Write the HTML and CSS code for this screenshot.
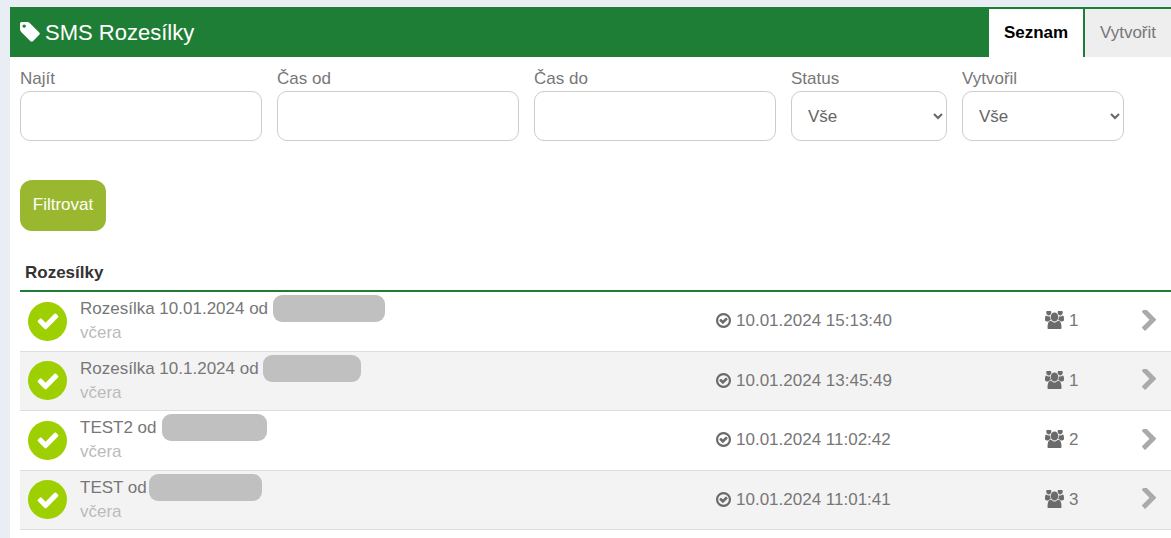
FILE: index.html
```html
<!DOCTYPE html>
<html lang="en">
<head>
    <meta charset="UTF-8">
    <meta name="viewport" content="width=device-width, initial-scale=1.0">
    <title>SMS Rozesílky</title>
    <link rel="stylesheet" href="styles.css">
</head>
<body>
    <!-- Icons -->
    <svg class="icon-defs" xmlns="http://www.w3.org/2000/svg">
        <symbol id="i-tag" viewBox="128 128 1536 1536"><path d="M576 448q0-53-37.5-90.5t-90.5-37.5-90.5 37.5-37.5 90.5 37.5 90.5 90.5 37.5 90.5-37.5 37.5-90.5zm1067 576q0 53-37 90l-491 492q-39 37-91 37-53 0-90-37l-715-716q-38-37-64.5-101t-26.5-117v-416q0-52 38-90t90-38h416q53 0 117 26.5t102 64.5l715 714q37 39 37 91z"/></symbol>
        <symbol id="i-check" viewBox="0 0 1792 1792"><path d="M1671 566q0 40-28 68l-724 724-136 136q-28 28-68 28t-68-28l-136-136-362-362q-28-28-28-68t28-68l136-136q28-28 68-28t68 28l294 295 656-657q28-28 68-28t68 28l136 136q28 28 28 68z"/></symbol>
        <symbol id="i-check-o" viewBox="128 128 1536 1536"><path d="M1299 813l-422 422q-19 19-45 19t-45-19l-294-294q-19-19-19-45t19-45l102-102q19-19 45-19t45 19l147 147 275-275q19-19 45-19t45 19l102 102q19 19 19 45t-19 45zm141 83q0-148-73-273t-198-198-273-73-273 73-198 198-73 273 73 273 198 198 273 73 273-73 198-198 73-273zm224 0q0 209-103 385.5t-279.5 279.5-385.5 103-385.5-103-279.5-279.5-103-385.5 103-385.5 279.5-279.5 385.5-103 385.5 103 279.5 279.5 103 385.5z"/></symbol>
        <symbol id="i-users" viewBox="0 128 1920 1536" preserveAspectRatio="none"><path d="M593 896q-162 5-265 128h-134q-82 0-138-40.5t-56-118.5q0-353 124-353 6 0 43.5 21t97.5 42.5 119 21.5q67 0 133-23-5 37-5 66 0 139 81 256zm1071 637q0 120-73 189.5t-194 69.5h-874q-121 0-194-69.5t-73-189.5q0-53 3.5-103.5t14-109 26.5-108.5 43-97.5 62-81 85.5-53.5 111.5-20q10 0 43 21.5t73 48 107 48 135 21.5 135-21.5 107-48 73-48 43-21.5q61 0 111.5 20t85.5 53.5 62 81 43 97.5 26.5 108.5 14 109 3.5 103.5zm-1024-1277q0 106-75 181t-181 75-181-75-75-181 75-181 181-75 181 75 75 181zm704 384q0 159-112.5 271.5t-271.5 112.5-271.5-112.5-112.5-271.5 112.5-271.5 271.5-112.5 271.5 112.5 112.5 271.5zm576 225q0 78-56 118.5t-138 40.5h-134q-103-123-265-128 81-117 81-256 0-29-5-66 66 23 133 23 59 0 119-21.5t97.5-42.5 43.5-21q124 0 124 353zm-128-609q0 106-75 181t-181 75-181-75-75-181 75-181 181-75 181 75 75 181z"/></symbol>
        <symbol id="i-chevron" viewBox="320 128 1088 1536"><path d="M1363 877l-742 742q-19 19-45 19t-45-19l-166-166q-19-19-19-45t19-45l531-531-531-531q-19-19-19-45t19-45l166-166q19-19 45-19t45 19l742 742q19 19 19 45t-19 45z"/></symbol>
    </svg>

    <div class="page">
        <!-- Header -->
        <div class="header">
            <h1 class="title"><svg class="title-icon"><use href="#i-tag"/></svg>SMS Rozesílky</h1>
            <div class="tabs">
                <a class="tab active">Seznam</a>
                <a class="tab">Vytvořit</a>
            </div>
        </div>

        <!-- Filter -->
        <form class="filter">
            <div class="field">
                <label>Najít</label>
                <input type="text">
            </div>
            <div class="field">
                <label>Čas od</label>
                <input type="text">
            </div>
            <div class="field">
                <label>Čas do</label>
                <input type="text">
            </div>
            <div class="field field-status">
                <label>Status</label>
                <select><option>Vše</option></select>
            </div>
            <div class="field field-author">
                <label>Vytvořil</label>
                <select><option>Vše</option></select>
            </div>
        </form>
        <button class="filter-btn" type="button">Filtrovat</button>

        <!-- List -->
        <h2 class="list-title">Rozesílky</h2>
        <div class="list">
            <div class="row">
                <span class="status"><svg><use href="#i-check"/></svg></span>
                <div class="info">
                    <div class="name">Rozesílka 10.01.2024 od <span class="hidden-name w1"></span></div>
                    <div class="ago">včera</div>
                </div>
                <div class="time"><svg class="small-icon"><use href="#i-check-o"/></svg>10.01.2024 15:13:40</div>
                <div class="count"><svg class="users-icon"><use href="#i-users"/></svg>1</div>
                <svg class="chevron"><use href="#i-chevron"/></svg>
            </div>
            <div class="row">
                <span class="status"><svg><use href="#i-check"/></svg></span>
                <div class="info">
                    <div class="name">Rozesílka 10.1.2024 od <span class="hidden-name w2"></span></div>
                    <div class="ago">včera</div>
                </div>
                <div class="time"><svg class="small-icon"><use href="#i-check-o"/></svg>10.01.2024 13:45:49</div>
                <div class="count"><svg class="users-icon"><use href="#i-users"/></svg>1</div>
                <svg class="chevron"><use href="#i-chevron"/></svg>
            </div>
            <div class="row">
                <span class="status"><svg><use href="#i-check"/></svg></span>
                <div class="info">
                    <div class="name">TEST2 od <span class="hidden-name w3"></span></div>
                    <div class="ago">včera</div>
                </div>
                <div class="time"><svg class="small-icon"><use href="#i-check-o"/></svg>10.01.2024 11:02:42</div>
                <div class="count"><svg class="users-icon"><use href="#i-users"/></svg>2</div>
                <svg class="chevron"><use href="#i-chevron"/></svg>
            </div>
            <div class="row">
                <span class="status"><svg><use href="#i-check"/></svg></span>
                <div class="info">
                    <div class="name">TEST od<span class="hidden-name w4"></span></div>
                    <div class="ago">včera</div>
                </div>
                <div class="time"><svg class="small-icon"><use href="#i-check-o"/></svg>10.01.2024 11:01:41</div>
                <div class="count"><svg class="users-icon"><use href="#i-users"/></svg>3</div>
                <svg class="chevron"><use href="#i-chevron"/></svg>
            </div>
        </div>
    </div>
</body>
</html>
```

FILE: styles.css
```css
/* General Styles */
body {
    font-family: "Liberation Sans", Arial, sans-serif;
    font-size: 17px;
    margin: 0;
    padding: 7px 0 0 10px;
    background: #e9edf4;
    color: #777;
    overflow: hidden;
}

.icon-defs {
    display: none;
}

.page {
    background: #fff;
    height: 531px;
}

/* Header */
.header {
    display: flex;
    justify-content: space-between;
    height: 50px;
    background: #1f7e35;
}

.title {
    display: flex;
    align-items: center;
    margin: 0;
    padding: 2px 0 0 10px;
    color: #fff;
    font-size: 22px;
    font-weight: normal;
}

.title-icon {
    width: 20px;
    height: 20px;
    margin: -2px 5px 0 0;
    fill: #fff;
}

.tabs {
    display: flex;
    padding-top: 2px;
}

.tab {
    display: flex;
    align-items: center;
    justify-content: center;
    color: #777;
    background: #eee;
    width: 86px;
    margin-left: 2px;
}

.tab.active {
    width: 94px;
    margin-left: 0;
    background: #fff;
    color: #000;
    font-weight: bold;
}

/* Filter */
.filter {
    display: flex;
    gap: 15px;
    padding: 11px 0 0 10px;
}

.field {
    display: flex;
    flex-direction: column;
    width: 242px;
}

.field-status {
    width: 156px;
}

.field-author {
    width: 162px;
}

label {
    line-height: 22px;
    margin-bottom: 1px;
}

input,
select {
    box-sizing: border-box;
    height: 50px;
    width: 100%;
    border: 1px solid #ccc;
    border-radius: 10px;
    background: #fff;
    font-family: inherit;
    font-size: 17px;
    color: #666;
}

select {
    padding-left: 12px;
}

.filter-btn {
    display: block;
    margin: 39px 0 0 10px;
    width: 86px;
    height: 51px;
    padding: 0 0 1px;
    border: none;
    border-radius: 12px;
    background: #9ab82f;
    color: #fff;
    font-family: inherit;
    font-size: 17px;
}

/* List */
.list-title {
    margin: 31px 0 0 10px;
    padding: 0 0 7px 5px;
    font-size: 17px;
    line-height: 21px;
    color: #333;
    border-bottom: 2px solid #1f7e35;
}

.list {
    margin-left: 10px;
}

.row {
    box-sizing: border-box;
    display: grid;
    grid-template-columns: 60px 636px 329px 96px 1fr;
    align-items: center;
    height: 59.5px;
    border-bottom: 1px solid #ddd;
}

.row:nth-child(even) {
    background: #f3f3f3;
}

.status {
    display: flex;
    align-items: center;
    justify-content: center;
    width: 39px;
    height: 39px;
    margin-left: 8px;
    border-radius: 50%;
    background: #9ecf00;
}

.status svg {
    width: 24px;
    height: 24px;
    fill: #fff;
}

.name {
    line-height: 24px;
    white-space: nowrap;
}

.ago {
    line-height: 24px;
    color: #bbb;
}

/* Redacted sender name */
.hidden-name {
    display: inline-block;
    height: 27px;
    margin: -6px 0 -4px;
    vertical-align: middle;
    border-radius: 9px;
    background: #c0c0c0;
}

.w1 {
    width: 112px;
}

.w2 {
    width: 98px;
}

.w3 {
    width: 105px;
    margin-left: 1px;
}

.w4 {
    width: 113px;
    margin-left: 2px;
}

.time,
.count {
    display: flex;
    align-items: center;
}

.small-icon {
    width: 15px;
    height: 15px;
    margin: -1px 5px 0 0;
    fill: #6b6b6b;
}

.users-icon {
    width: 19px;
    height: 18px;
    margin: -2px 5px 0 0;
    fill: #6b6b6b;
}

.chevron {
    width: 16px;
    height: 21px;
    margin-top: -2px;
    fill: #aaa;
}
```
